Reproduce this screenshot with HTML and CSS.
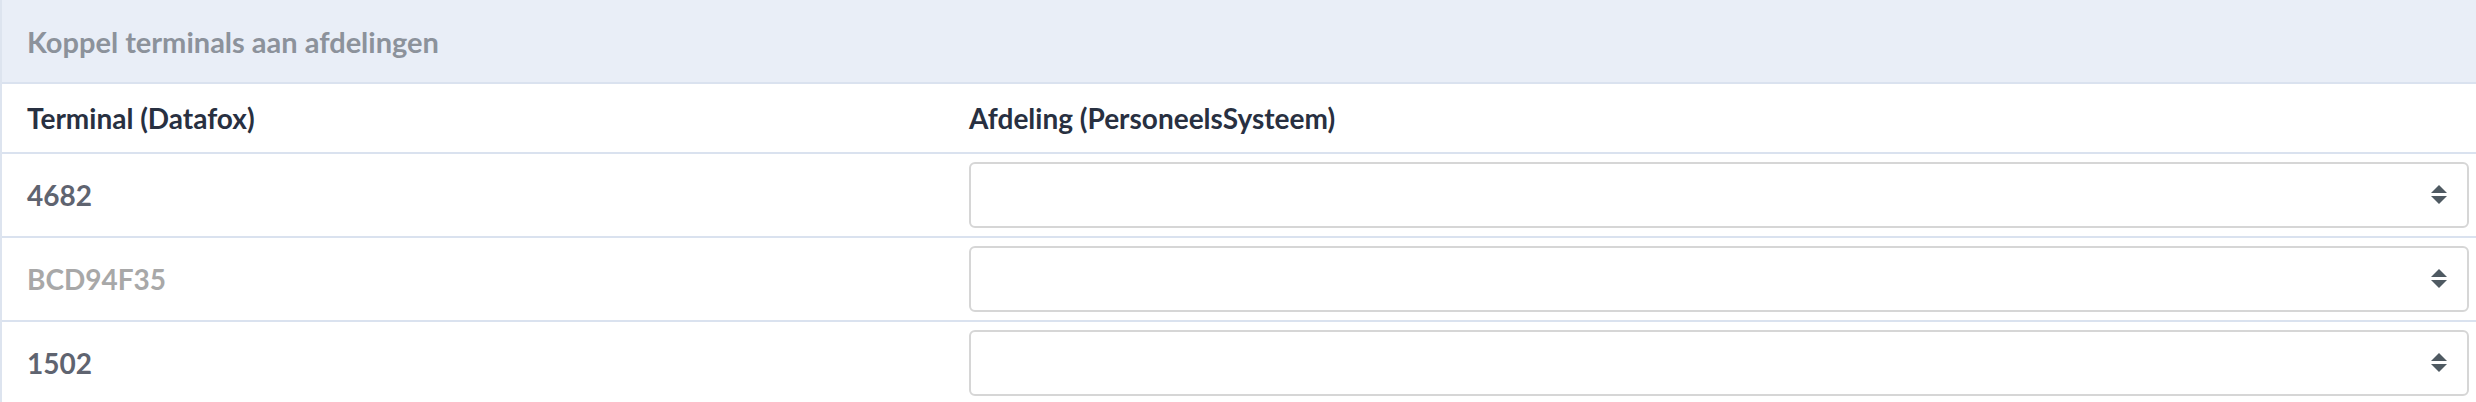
FILE: index.html
```html
<!DOCTYPE html>
<html lang="nl">
<head>
    <meta charset="UTF-8">
    <title>Koppel terminals aan afdelingen</title>
    <link rel="stylesheet" href="styles.css">
</head>
<body>
<div class="panel">
    <div class="panel-title">Koppel terminals aan afdelingen</div>

    <div class="table">
        <div class="row head">
            <div class="cell">Terminal (Datafox)</div>
            <div class="cell cell-select">Afdeling (PersoneelsSysteem)</div>
        </div>

        <div class="row">
            <div class="cell">4682</div>
            <div class="cell cell-select">
                <div class="select-wrap">
                    <select class="dept-select"><option></option></select>
                    <svg class="select-arrow" width="16" height="19" viewBox="0 0 16 19">
                        <path d="M8 0 L16 8 H0 Z M0 11 H16 L8 19 Z" fill="#4f5a62"/>
                    </svg>
                </div>
            </div>
        </div>

        <div class="row">
            <div class="cell muted">BCD94F35</div>
            <div class="cell cell-select">
                <div class="select-wrap">
                    <select class="dept-select"><option></option></select>
                    <svg class="select-arrow" width="16" height="19" viewBox="0 0 16 19">
                        <path d="M8 0 L16 8 H0 Z M0 11 H16 L8 19 Z" fill="#4f5a62"/>
                    </svg>
                </div>
            </div>
        </div>

        <div class="row">
            <div class="cell">1502</div>
            <div class="cell cell-select">
                <div class="select-wrap">
                    <select class="dept-select"><option></option></select>
                    <svg class="select-arrow" width="16" height="19" viewBox="0 0 16 19">
                        <path d="M8 0 L16 8 H0 Z M0 11 H16 L8 19 Z" fill="#4f5a62"/>
                    </svg>
                </div>
            </div>
        </div>
    </div>
</div>
</body>
</html>
```

FILE: styles.css
```css
/* pagina */
body {
    margin: 0;
    background-color: #fff;
    font-family: "Lato", "Liberation Sans", sans-serif;
}

/* paneel met lichte rand links */
.panel {
    border-left: 2px solid #dde4ef;
}

/* titelbalk */
.panel-title {
    height: 82px;
    display: flex;
    align-items: center;
    padding-left: 25px;
    background-color: #e9eef7;
    border-bottom: 2px solid #dae2ef;
    color: #8c929b;
    font-size: 29px;
    font-weight: 700;
}

/* rijen */
.row {
    display: grid;
    grid-template-columns: 942px 1fr;
    height: 82px;
    border-bottom: 2px solid #dae2ef;
}

.row.head {
    height: 68px;
}

.cell {
    display: flex;
    align-items: center;
    padding-left: 25px;
    color: #5f6470;
    font-size: 28px;
    font-weight: 700;
}

.row.head .cell {
    color: #283041;
}

.cell.muted {
    color: #a8a8a8;
}

.cell-select {
    padding-left: 25px;
    padding-right: 7px;
}

/* select box */
.select-wrap {
    position: relative;
    width: 100%;
}

.dept-select {
    display: block;
    width: 100%;
    height: 66px;
    box-sizing: border-box;
    border: 2px solid #d6d6d6;
    border-radius: 6px;
    background-color: #fff;
    appearance: none;
    -webkit-appearance: none;
    outline: none;
}

/* pijltjes rechts in de select */
.select-arrow {
    position: absolute;
    right: 22px;
    top: 23px;
    pointer-events: none;
}
```
